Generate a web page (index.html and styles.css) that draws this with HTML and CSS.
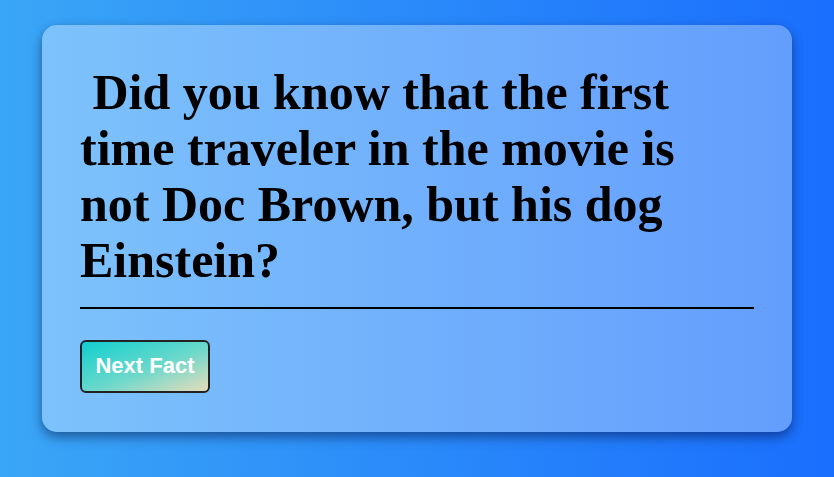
FILE: index.html
```html
<!DOCTYPE html>
<html>
<head>
<meta charset="utf-8">
<link rel="stylesheet" href="styles.css">
</head>
<body>
<div class="page">
  <div class="card">
    <h1 class="fact">&nbsp;Did you know that the first time traveler in the movie is not Doc Brown, but his dog Einstein?</h1>
    <hr class="rule">
    <button class="next-btn">Next Fact</button>
  </div>
</div>
</body>
</html>
```
FILE: styles.css
```css
html, body {
  margin: 0;
  padding: 0;
}
body {
  width: 834px;
  height: 477px;
  overflow: hidden;
  background: linear-gradient(to right, #3aa6f6, #1a6efd);
  font-family: "Liberation Serif", serif;
}
.page {
  padding: 25px 42px 0 42px;
}
.card {
  width: 750px;
  height: 407px;
  box-sizing: border-box;
  padding: 39px 38px;
  border-radius: 15px;
  background: linear-gradient(to right, #7dc2fb, #649efd);
  box-shadow: 0 5px 12px rgba(0, 0, 40, 0.45);
  display: flex;
  flex-direction: column;
  align-items: flex-start;
}
.fact {
  margin: 0;
  font-size: 50px;
  font-weight: bold;
  line-height: 56px;
  color: #000;
}
.rule {
  align-self: stretch;
  margin: 19px 0 0 0;
  border: none;
  height: 2px;
  background: #000;
}
.next-btn {
  margin-top: 31px;
  width: 130px;
  height: 54px;
  border: 2px solid #222;
  border-radius: 6px;
  background: linear-gradient(to bottom right, #10cfcf, #6dd8cb 55%, #e6dcbb);
  color: #fff;
  font-family: "Liberation Sans", Arial, sans-serif;
  font-weight: bold;
  font-size: 22px;
  padding: 0;
}
```
